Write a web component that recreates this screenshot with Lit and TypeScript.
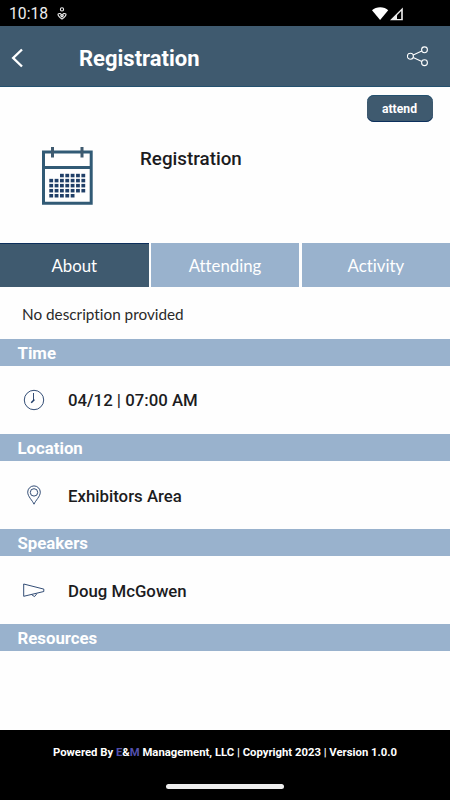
import { LitElement, html, svg, css } from "lit";
import { customElement, property, state } from "lit/decorators.js";
import { classMap } from "lit/directives/class-map.js";

const clockIcon = svg`<circle cx="12" cy="12" r="9.700"/><path d="M11.500 5v7"/><path d="M12 12l-2.800 2.800" stroke-width="1.500"/><circle cx="11.800" cy="12" r=".5"/>`;
const pinIcon = svg`<path d="M12 21.200C10.500 17.500 5.700 13.500 5.700 9.200a6.300 6.300 0 0 1 12.600 0C18.300 13.500 13.500 17.500 12 21.200z"/><circle cx="12" cy="9.400" r="3.700"/>`;
const hornIcon = svg`<path d="M1.700 6v12.300L21.800 13.500v-2.400z"/><path d="M9.700 16.700l2.800 1.900 2.400-2.900"/>`;

@customElement("section-block")
class SectionBlock extends LitElement {
  @property() heading = "";
  @property() text = "";
  @property({ attribute: false }) icon: unknown;

  static styles = css`
    :host { display: block; flex: none; }
    .bar {
      box-sizing: border-box; height: 27px; padding: 1px 0 0 17.500px;
      background: #99b2cd; color: #fff;
      font: 700 16.800px/27px Roboto, sans-serif;
    }
    .row {
      display: flex; align-items: center; height: 68.200px; padding-left: 22px;
      font: 500 16.800px/24px Roboto, sans-serif; color: #1c1c1e;
    }
    .icon { width: 24px; height: 24px; margin-right: 22px; fill: none; stroke: #1d3a66; stroke-width: .9; }
    .label { padding-top: 1px; }
  `;

  render() {
    return html`
      <div class="bar">${this.heading}</div>
      ${this.text
        ? html`<div class="row">
            <svg class="icon" viewBox="0 0 24 24">${this.icon}</svg>
            <span class="label">${this.text}</span>
          </div>`
        : null}
    `;
  }
}

@customElement("app-root")
class AppRoot extends LitElement {
  @state() private active = "About";

  static styles = css`
    :host {
      display: flex; flex-direction: column; height: 800px; width: 100%;
      overflow: hidden; background: #fefefe; font-family: Roboto, sans-serif;
    }
    .status {
      display: flex; align-items: center; flex: none; height: 26px;
      box-sizing: border-box; padding: 1px 46px 0 9px; background: #000; color: #eee;
      font-size: 15.700px; line-height: 26px;
    }
    .person { width: 10px; height: 13px; margin-left: 9px; fill: none; stroke: #eee; stroke-width: 1.100; }
    .signals { width: 33px; height: 16px; margin-left: auto; }
    .header {
      display: flex; align-items: center; flex: none; box-sizing: border-box;
      height: 61px; padding: 0 21px 0 10px; background: #3f5a6f; color: #fff;
      border-bottom: 1px solid #24516f;
    }
    .back { width: 14px; height: 20px; margin-top: 3px; fill: none; stroke: #fff; stroke-width: 2.400; }
    .title { margin: 5px 0 0 55px; font-size: 22px; font-weight: 700; line-height: 30px; }
    .share { width: 22px; height: 22px; margin-left: auto; fill: none; stroke: #fff; stroke-width: 1.100; }
    .hero { display: flex; align-items: flex-start; flex: none; height: 156px; }
    .calendar { width: 52px; height: 60px; margin: 59px 0 0 41px; }
    .name { flex: 1; margin: 60px 0 0 47px; font-size: 18.800px; font-weight: 500; line-height: 24px; color: #1c1c1e; }
    .attend {
      width: 66px; height: 27px; margin: 8px 17.500px 0 0; padding: 1px 0 0;
      border: 0; border-radius: 7px; background: #3f5a6f; color: #fff;
      font: 700 12.200px/26px Roboto, sans-serif;
      box-shadow: inset 0 -1px #0c2f5c, inset 0 1px #24516f;
    }
    .tabs { display: grid; grid-template-columns: 148.500px 148.500px 148.500px; gap: 2.300px; flex: none; height: 44px; }
    .tab {
      padding: 2px 0 0; border: 0; background: #99b2cd; color: #fff;
      font: 400 16.800px/42px Lato, sans-serif; font-variant-ligatures: none;
    }
    .tab.on { background: #3f5a6f; box-shadow: inset 0 1px #0c2f5c; }
    .description {
      flex: none; box-sizing: border-box; height: 51.800px; padding: 15px 0 0 22px;
      font: 400 15.300px/24px Lato, sans-serif; color: #2a2a2a; font-variant-ligatures: none;
    }
    .footer {
      display: flex; flex-direction: column; align-items: center; flex: none;
      box-sizing: border-box; height: 70px; margin-top: auto; padding-top: 13px;
      background: #000; color: #fff; font-size: 11.300px; font-weight: 700; line-height: 20px;
    }
    .brand { color: #5350ad; }
    .handle { width: 118px; height: 5px; margin-top: 21px; border-radius: 3px; background: #eee; }
  `;

  private calendar() {
    const rows = [[2, 7], [0, 7], [0, 7], [0, 7], [0, 5]];
    return svg`
      <path d="M2.500 6h47.700v51.200H2.500zM2.500 21.500h47.700" fill="none" stroke="#315a75" stroke-width="3"/>
      <path d="M11.500 1v10.500M41 1v10.500" stroke="#3f5a6f" stroke-width="3"/>
      ${rows.map(([from, to], r) =>
        Array.from({ length: to - from }, (_, i) => svg`
          <rect x=${8.300 + (from + i) * 5.350} y=${27.800 + r * 5.050} width="3.800" height="3.500" fill="#203f68"/>`)
      )}`;
  }

  render() {
    return html`
      <div class="status">
        <span>10:18</span>
        <svg class="person" viewBox="0 0 10 13">
          <circle cx="5" cy="2.400" r="1.600"/>
          <path d="M1 7.200c1.500-1.400 3-.5 4 1 1-1.500 2.500-2.400 4-1C9.300 9 7 10.700 5 12.100 3 10.700.7 9 1 7.200zM3.300 8.300L5 9.900l1.700-1.600"/>
        </svg>
        <svg class="signals" viewBox="0 0 33 16">
          <path d="M1 4.200C5 .1 13.500.1 17.200 4.200L9.100 14z" fill="#fff"/>
          <path d="M31.800 1.400v12.900H19z" fill="#eee"/>
          <path d="M30.200 5v8h-4.200V9.200z" fill="#000"/>
        </svg>
      </div>
      <div class="header">
        <svg class="back" viewBox="0 0 14 20"><path d="M12 1.500L3.200 10l8.800 8.500"/></svg>
        <div class="title">Registration</div>
        <svg class="share" viewBox="0 0 22 22">
          <circle cx="3.400" cy="11.300" r="3"/><circle cx="17.500" cy="4.800" r="2.900"/><circle cx="17.500" cy="17.700" r="2.900"/>
          <path d="M6.200 10l8.600-4M6.200 12.400l8.600 4.200"/>
        </svg>
      </div>
      <div class="hero">
        <svg class="calendar" viewBox="0 0 52 60">${this.calendar()}</svg>
        <div class="name">Registration</div>
        <button class="attend">attend</button>
      </div>
      <div class="tabs">
        ${["About", "Attending", "Activity"].map(
          (t) => html`<button class=${classMap({ tab: true, on: t === this.active })} @click=${() => (this.active = t)}>${t}</button>`
        )}
      </div>
      <div class="description">No description provided</div>
      <section-block heading="Time" text="04/12 | 07:00 AM" .icon=${clockIcon}></section-block>
      <section-block heading="Location" text="Exhibitors Area" .icon=${pinIcon}></section-block>
      <section-block heading="Speakers" text="Doug McGowen" .icon=${hornIcon}></section-block>
      <section-block heading="Resources"></section-block>
      <div class="footer">
        <div>Powered By <span class="brand">E</span>&amp;<span class="brand">M</span> Management, LLC | Copyright 2023 | Version 1.0.0</div>
        <div class="handle"></div>
      </div>
    `;
  }
}
